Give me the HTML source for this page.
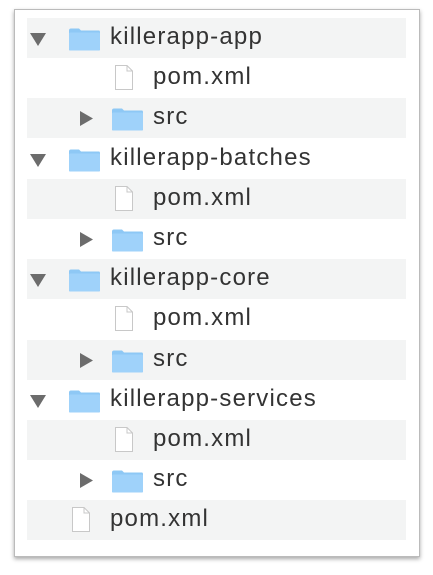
<html><head><style>
body{margin:0;width:433px;height:575px;background:#fff;font-family:"Liberation Sans",sans-serif;position:relative;overflow:hidden}
.frame{position:absolute;left:14px;top:9px;width:404px;height:546px;border:1px solid #bbb;box-shadow:0 2px 4px rgba(0,0,0,.35);background:#fff}
.row{position:absolute;left:27px;width:379px;height:40px}
.g{background:#f3f4f4}
.t{position:absolute;font-size:24px;letter-spacing:1.2px;color:#333;top:5px}
.fold{position:absolute;top:9px;width:33px;height:25px}
.tri{position:absolute;top:13px}
.file{position:absolute;top:6px}
</style></head><body>
<div class="frame"></div>
<div id="rows"></div>
<script>
var rows=[[0,'d','killerapp-app'],[1,'f','pom.xml'],[1,'d','src'],[0,'d','killerapp-batches'],[1,'f','pom.xml'],[1,'d','src'],[0,'d','killerapp-core'],[1,'f','pom.xml'],[1,'d','src'],[0,'d','killerapp-services'],[1,'f','pom.xml'],[1,'d','src'],[0,'f','pom.xml']];
var h='';
var folder='<svg class="fold" style="left:LEFTpx" viewBox="0 0 33 24"><path d="M1 3 Q1 1 3 1 H11 L13 3 H31 Q32 3 32 5 V22 Q32 23 31 23 H2 Q1 23 1 22 Z" fill="#8ec8f5"/><rect x="1" y="5" width="31" height="18" rx="1.5" fill="#9fd2fa"/></svg>';
var file='<svg class="file" style="left:LEFTpx" width="20" height="27" viewBox="0 0 20 27"><path d="M1.5 1.5 H13 L18.5 7 V25.5 H1.5 Z" fill="#fff" stroke="#c8c8c8"/><path d="M13 1.5 V7 H18.5" fill="none" stroke="#c8c8c8"/></svg>';
rows.forEach(function(r,i){
 var y=18+i*40.2, last=i==12;
 h+='<div class="row'+(i%2==0?' g':'')+'" style="top:'+y+'px">';
 var ind=r[0]?43:0;
 if(r[1]=='d'){
  if(r[0]) h+='<svg class="tri" style="left:52px" width="14" height="15"><path d="M1 0 L14 7.5 L1 15Z" fill="#6c6c6c"/></svg>';
  else h+='<svg class="tri" style="left:3px;top:15px" width="16" height="13"><path d="M0 0 H16 L8 13Z" fill="#6c6c6c"/></svg>';
  h+=folder.replace('LEFT',41+ind);
 } else {
  h+=file.replace('LEFT',last?44:87);
 }
 h+='<div class="t" style="left:'+(83+ind)+'px">'+r[2]+'</div></div>';
});
document.getElementById('rows').innerHTML=h;
</script>
</body></html>
